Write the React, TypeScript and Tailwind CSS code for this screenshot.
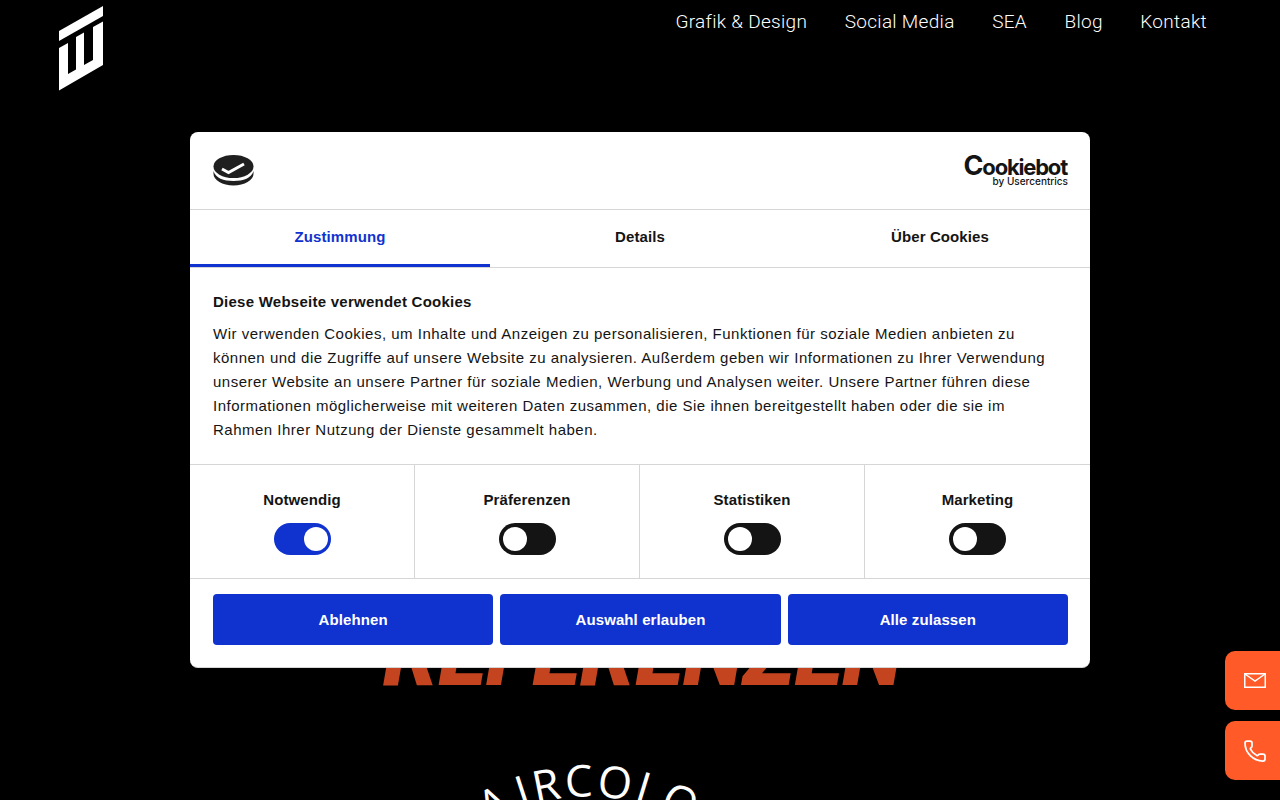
import { Phone } from 'lucide-react'

const navItems = ['Grafik & Design', 'Social Media', 'SEA', 'Blog', 'Kontakt']
const tabs = ['Zustimmung', 'Details', 'Über Cookies']
const consent = [
  { label: 'Notwendig', on: true },
  { label: 'Präferenzen', on: false },
  { label: 'Statistiken', on: false },
  { label: 'Marketing', on: false },
]
const actions = ['Ablehnen', 'Auswahl erlauben', 'Alle zulassen']

const SiteLogo = () => (
  <svg width="44" height="85" viewBox="0 0 44 85" fill="#fff" className="block">
    <path d="M0 25 44 0v10L0 35z" />
    <path d="M0 42l9-5V68l8-4.500V31l8-4.500V59l9-5V21l10-5.500V59L0 84.500z" />
  </svg>
)

const CookieCoin = () => (
  <svg width="41" height="31" viewBox="0 0 41 31" className="block">
    <ellipse cx="20.500" cy="11.500" rx="20" ry="11.500" fill="#1f1f1f" />
    <path d="M0.500 16c2 7 10 10 20 10s18-3 20-10v3c0 6-9 11.500-20 11.500S0.500 25 0.500 19z" fill="#1f1f1f" />
    <path d="M9 14l6.500 3.500L31 9" fill="none" stroke="#fff" strokeWidth="3" />
  </svg>
)

const Toggle = ({ on }: { on: boolean }) => (
  <div
    className={`flex h-8 w-[57px] items-center rounded-full ${
      on ? 'justify-end bg-[#1032cf] pr-[3px]' : 'justify-start bg-[#141414] pl-[4px]'
    }`}
  >
    <div className="h-6 w-6 rounded-full bg-white" />
  </div>
)

export default function App() {
  return (
    <div className="relative h-screen overflow-hidden bg-black font-['Liberation_Sans',sans-serif]">
      <header className="flex items-start justify-between pl-[59px] pr-[73px] pt-[6px]">
        <SiteLogo />
        <nav className="flex gap-[37.500px] pt-[2px] font-['Roboto',sans-serif] text-[19px] leading-7 font-light tracking-[0.3px] text-white">
          {navItems.map((item) => (
            <a key={item}>{item}</a>
          ))}
        </nav>
      </header>

      <main className="flex flex-col items-center">
        <h1 className="mt-[510px] h-[108px] pl-[5px] font-['Roboto',sans-serif] text-[88.500px] leading-[108px] font-black tracking-[-0.5px] text-[#c4441f] italic">
          REFERENZEN
        </h1>
        <svg width="640" height="300" viewBox="0 0 640 300" className="mt-[41px] shrink-0">
          <path id="arc" d="M75 240a193.600 193.600 0 0 1 387.200 0" fill="none" />
          <text fill="#fff" fontFamily="Open Sans, sans-serif" fontSize="44" fontWeight="500" letterSpacing="3">
            <textPath href="#arc" startOffset="50%" textAnchor="middle">
              HA<tspan dx="6">IRCOLO</tspan>
              <tspan dx="3">R</tspan>
            </textPath>
          </text>
        </svg>
      </main>

      <div className="absolute right-0 bottom-[20px] flex flex-col gap-[11px]">
        <a className="flex h-[59px] w-[55px] items-center justify-center rounded-l-[10px] bg-[#ff5a28] pl-[5px]">
          <svg width="22" height="15" viewBox="0 0 22 15" fill="none" stroke="#fff" strokeWidth="1.500">
            <rect x="0.750" y="0.750" width="20.500" height="13.500" />
            <path d="M1 1l10 7 10-7" />
          </svg>
        </a>
        <a className="flex h-[59px] w-[55px] items-center justify-center rounded-l-[10px] bg-[#ff5a28] pl-[4px]">
          <Phone size={24} color="#fff" strokeWidth={1.750} />
        </a>
      </div>

      <div className="absolute top-[132px] left-[190px] w-[900px] overflow-hidden rounded-lg border-b border-[#d6d6d6] bg-white text-[15px] tracking-[0.5px] text-[#141414]">
        <div className="flex h-[77px] items-center justify-between pr-[22px] pl-[23px]">
          <CookieCoin />
          <div className="flex flex-col items-end text-[#141414]">
            <span className="mr-px font-['Inter',sans-serif] text-[22px] leading-[22px] font-bold tracking-[-1.200px]">
              <span className="text-[27px]">C</span>ookiebot
            </span>
            <span className="-mt-[2px] font-['Inter',sans-serif] text-[10px] leading-[11px] font-medium tracking-normal">
              by Usercentrics
            </span>
          </div>
        </div>

        <div className="flex border-y border-[#d6d6d6]">
          {tabs.map((tab, i) => (
            <div
              key={tab}
              className={`flex h-[57px] flex-1 justify-center border-b-[3px] pt-[15px] leading-6 font-bold tracking-[0.1px] ${
                i === 0 ? 'border-[#1032cf] text-[#1032cf]' : 'border-transparent'
              }`}
            >
              {tab}
            </div>
          ))}
        </div>

        <div className="border-b border-[#d6d6d6] px-[23px] pt-[22px] pb-[22px] leading-6">
          <h2 className="mb-[8px] font-bold tracking-[0.25px]">Diese Webseite verwendet Cookies</h2>
          <p className="w-[845px]">
            Wir verwenden Cookies, um Inhalte und Anzeigen zu personalisieren, Funktionen für soziale Medien anbieten zu
            können und die Zugriffe auf unsere Website zu analysieren. Außerdem geben wir Informationen zu Ihrer Verwendung
            unserer Website an unsere Partner für soziale Medien, Werbung und Analysen weiter. Unsere Partner führen diese
            Informationen möglicherweise mit weiteren Daten zusammen, die Sie ihnen bereitgestellt haben oder die sie im
            Rahmen Ihrer Nutzung der Dienste gesammelt haben.
          </p>
        </div>

        <div className="grid grid-cols-4 border-b border-[#d6d6d6]">
          {consent.map((c, i) => (
            <div
              key={c.label}
              className={`flex h-[113px] flex-col items-center gap-[11px] pt-[23px] ${
                i < 3 ? 'border-r border-[#d6d6d6]' : ''
              }`}
            >
              <span className="leading-6 font-bold tracking-[0.1px]">{c.label}</span>
              <Toggle on={c.on} />
            </div>
          ))}
        </div>

        <div className="flex gap-[7px] pt-[15px] pr-[22px] pb-[22px] pl-[23px]">
          {actions.map((a) => (
            <button key={a} className="h-[51px] flex-1 rounded bg-[#1032cf] pt-px font-bold tracking-[0.1px] text-white">
              {a}
            </button>
          ))}
        </div>
      </div>
    </div>
  )
}
